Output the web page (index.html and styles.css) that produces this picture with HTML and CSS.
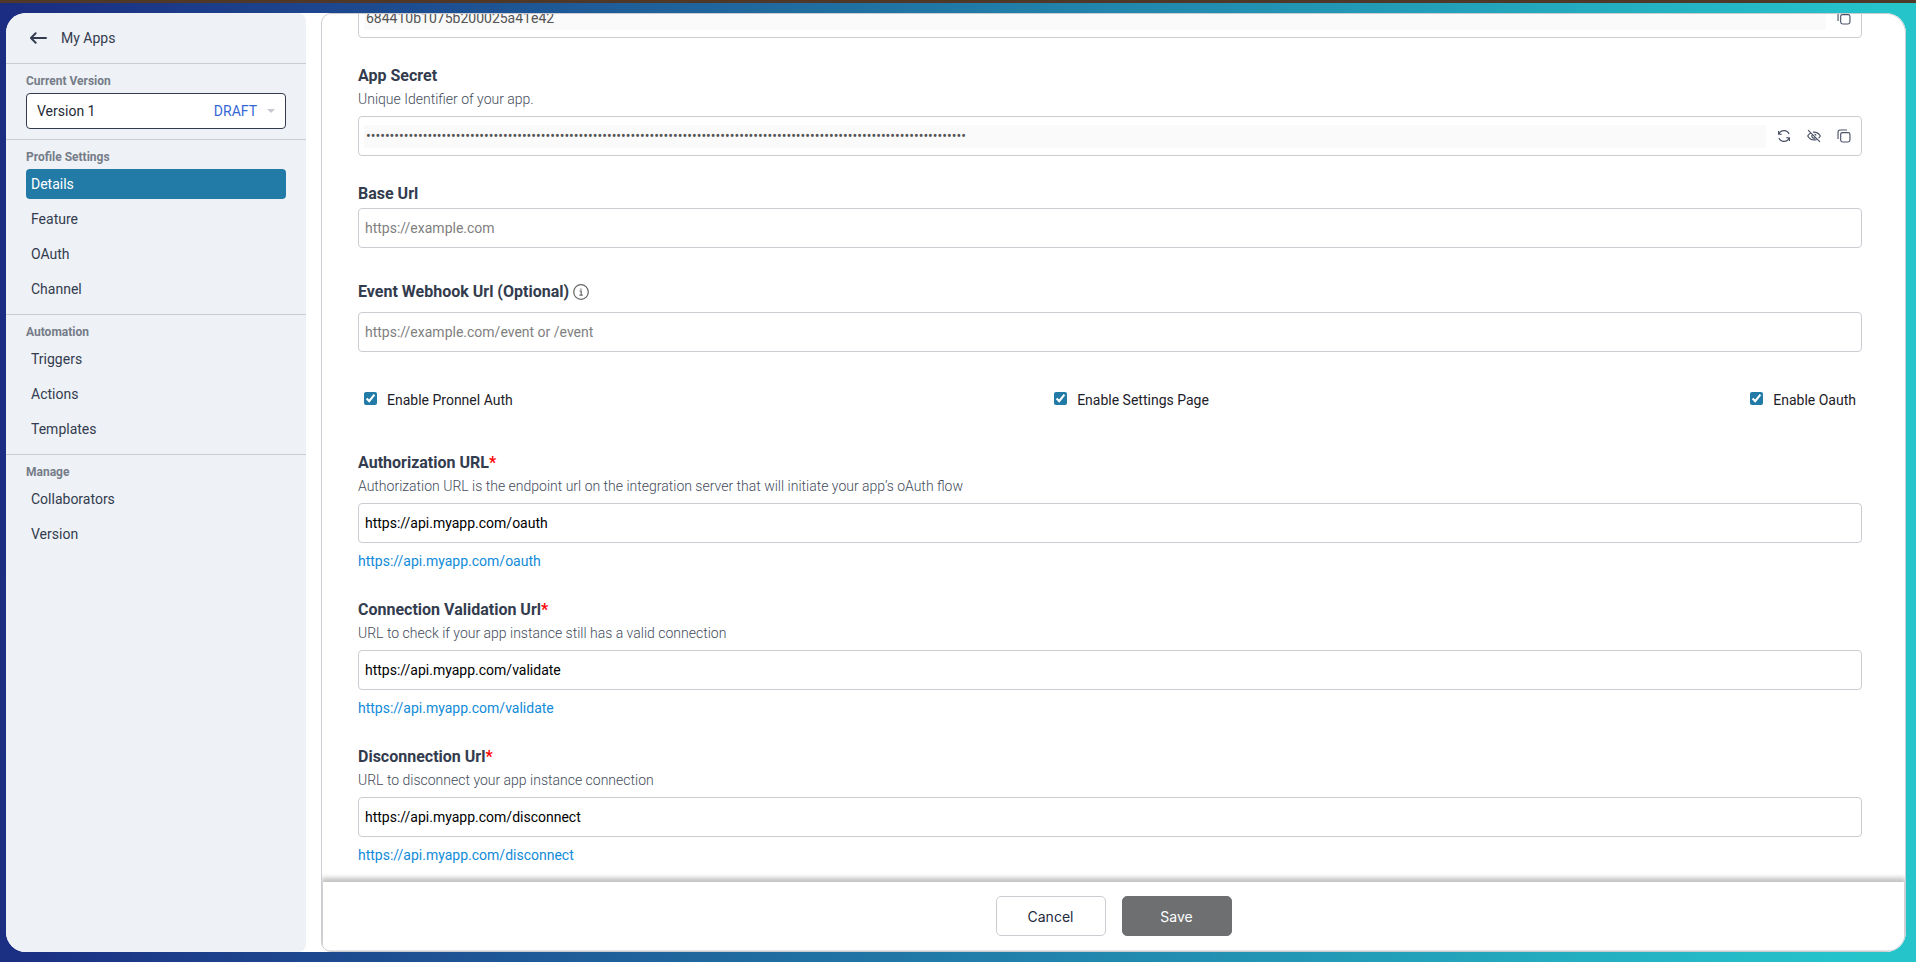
FILE: index.html
```html
<!DOCTYPE html>
<html lang="en">
<head>
<meta charset="utf-8">
<meta name="viewport" content="width=device-width, initial-scale=1">
<title>My Apps</title>
<link rel="stylesheet" href="styles.css">
</head>
<body>
<svg class="sprite" aria-hidden="true">
  <symbol id="icon-copy" viewBox="0 0 16 16">
    <rect x="4.200" y="4.200" width="10.600" height="10.600" rx="2.200"/>
    <path d="M1.200 11.500V3.200a2 2 0 0 1 2-2h8.300"/>
  </symbol>
  <symbol id="icon-refresh" viewBox="0 0 16 16">
    <path d="M2.200 6A6.200 6.200 0 0 1 13.800 5.700M13.800 10A6.200 6.200 0 0 1 2.200 10.300M1.800 2.200V6h3.700M14.200 13.800V10h-3.700"/>
  </symbol>
  <symbol id="icon-eye-off" viewBox="0 0 16 16">
    <path d="M4.600 4.300C2.900 5.100 1.600 6.500.8 8c1.500 2.700 4 4.500 7.200 4.500 1.100 0 2.100-.2 3-.6M6.800 3.600c4-.5 6.900 1.700 8.400 4.400-.5 1-1.200 1.800-2 2.500M6.200 6.400a2.300 2.300 0 0 0 3.300 3.300M8.600 5.700a2.300 2.300 0 0 1 1.700 1.800M1.200 1.200l13.600 13.600"/>
  </symbol>
</svg>
<div class="shell">
  <aside class="sidebar">
    <header class="sidebar-head">
      <a class="back" href="#apps">
        <svg class="back-icon" viewBox="0 0 18 12" aria-hidden="true"><path d="M17 6H1.500M6 1 1 6l5 5"/></svg>
        My Apps
      </a>
    </header>
    <section class="group">
      <label class="group-title" for="version">Current Version</label>
      <div class="version">
        <select id="version" class="version-select"><option>Version 1</option></select>
        <span class="version-state">DRAFT</span>
        <svg class="caret" viewBox="0 0 8 4" aria-hidden="true"><path d="M0 0h8L4 4z"/></svg>
      </div>
    </section>
    <nav class="group">
      <h2 class="group-title">Profile Settings</h2>
      <a class="item item-active" href="#details">Details</a>
      <a class="item" href="#feature">Feature</a>
      <a class="item" href="#oauth">OAuth</a>
      <a class="item" href="#channel">Channel</a>
    </nav>
    <nav class="group">
      <h2 class="group-title">Automation</h2>
      <a class="item" href="#triggers">Triggers</a>
      <a class="item" href="#actions">Actions</a>
      <a class="item" href="#templates">Templates</a>
    </nav>
    <nav class="group">
      <h2 class="group-title">Manage</h2>
      <a class="item" href="#collaborators">Collaborators</a>
      <a class="item" href="#version-list">Version</a>
    </nav>
  </aside>

  <main class="panel">
    <div class="scroll">
      <form class="form" id="details-form">
        <div class="field">
          <div class="box">
            <input class="box-input" type="text" value="684410b1075b200025a41e42" aria-label="App Id" disabled>
            <button class="icon-btn" type="button" aria-label="Copy"><svg class="icon"><use href="#icon-copy"/></svg></button>
          </div>
        </div>
        <div class="field">
          <label class="label" for="secret">App Secret</label>
          <p class="hint">Unique Identifier of your app.</p>
          <div class="box">
            <input class="box-input" id="secret" type="password" disabled value="0000000000000000000000000000000000000000000000000000000000000000000000000000000000000000000000000000000000000000000000000000000">
            <button class="icon-btn" type="button" aria-label="Regenerate"><svg class="icon"><use href="#icon-refresh"/></svg></button>
            <button class="icon-btn" type="button" aria-label="Show"><svg class="icon"><use href="#icon-eye-off"/></svg></button>
            <button class="icon-btn" type="button" aria-label="Copy"><svg class="icon"><use href="#icon-copy"/></svg></button>
          </div>
        </div>
        <div class="field">
          <label class="label" for="base">Base Url</label>
          <input class="input" id="base" type="text" placeholder="https://example.com">
        </div>
        <div class="field">
          <div class="label-row">
            <label class="label" for="webhook">Event Webhook Url (Optional)</label>
            <svg class="info" viewBox="0 0 16 16" aria-hidden="true"><circle cx="8" cy="8" r="7.300"/><path d="M6.600 7.200h1.600v4M6.400 11.200h3.400M8 4.400v1.300"/></svg>
          </div>
          <input class="input" id="webhook" type="text" placeholder="https://example.com/event or /event">
        </div>
        <div class="checks">
          <label class="check"><input type="checkbox" checked>Enable Pronnel Auth</label>
          <label class="check"><input type="checkbox" checked>Enable Settings Page</label>
          <label class="check"><input type="checkbox" checked>Enable Oauth</label>
        </div>
        <div class="field">
          <label class="label" for="auth">Authorization URL<span class="required">*</span></label>
          <p class="hint">Authorization URL is the endpoint url on the integration server that will initiate your app’s oAuth flow</p>
          <input class="input" id="auth" type="text" value="https://api.myapp.com/oauth">
          <a class="preview" href="#oauth-url">https://api.myapp.com/oauth</a>
        </div>
        <div class="field">
          <label class="label" for="validate">Connection Validation Url<span class="required">*</span></label>
          <p class="hint">URL to check if your app instance still has a valid connection</p>
          <input class="input" id="validate" type="text" value="https://api.myapp.com/validate">
          <a class="preview" href="#validate-url">https://api.myapp.com/validate</a>
        </div>
        <div class="field">
          <label class="label" for="disconnect">Disconnection Url<span class="required">*</span></label>
          <p class="hint">URL to disconnect your app instance connection</p>
          <input class="input" id="disconnect" type="text" value="https://api.myapp.com/disconnect">
          <a class="preview" href="#disconnect-url">https://api.myapp.com/disconnect</a>
        </div>
      </form>
    </div>
    <footer class="actions">
      <button class="btn" type="button">Cancel</button>
      <button class="btn btn-save" type="submit" form="details-form">Save</button>
    </footer>
  </main>
</div>
</body>
</html>
```
FILE: styles.css
```css
:root {
  --ink: #333c4e;
  --muted: #757c88;
  --line: #cbccd2;
  --accent: #227aa7;
}

* { box-sizing: border-box; }

body {
  margin: 0;
  height: 100vh;
  padding: 10px 10px 10px 6px;
  border-top: 3px solid #503828;
  background: linear-gradient(92deg, #1b2c81, #25c4cb 97%);
  color: var(--ink);
  font: 14px/20px Roboto, sans-serif;
  overflow: hidden;
}

input, select, button { font: inherit; }
h2, p { margin: 0; }
a { text-decoration: none; }
.sprite { display: none; }

.shell {
  display: flex;
  gap: 15px;
  height: 100%;
  border-radius: 20px;
  background: #fff;
  overflow: hidden;
}

/* Sidebar */
.sidebar {
  flex: 0 0 300px;
  background: #eef1f6;
  border-radius: 0 8px 8px 0;
}

.sidebar-head {
  display: flex;
  align-items: center;
  height: 50px;
  padding: 0 24px;
}

.back {
  display: flex;
  align-items: center;
  gap: 14px;
  color: var(--ink);
}

.back-icon {
  width: 17px;
  height: 12px;
  fill: none;
  stroke: currentColor;
  stroke-width: 2;
  stroke-linecap: round;
  stroke-linejoin: round;
}

.group {
  display: flex;
  flex-direction: column;
  gap: 5px;
  padding: 10px 20px;
  border-top: 1px solid var(--line);
}

.group-title {
  color: var(--muted);
  font-size: 12px;
  font-weight: 700;
  line-height: 14px;
}

.version {
  display: flex;
  align-items: center;
  height: 36px;
  padding: 0 10px;
  border: 1px solid var(--ink);
  border-radius: 4px;
  background: #fff;
}

.version-select {
  flex: 1;
  min-width: 0;
  padding: 0;
  border: 0;
  background: none;
  color: #1f2937;
  appearance: none;
}

.version-state { color: #3467d6; }

.caret {
  width: 8px;
  height: 4px;
  margin-left: 10px;
  fill: #c7c9d0;
}

.item {
  padding: 5px;
  border-radius: 4px;
  color: var(--ink);
}

.item-active {
  background: var(--accent);
  color: #fff;
}

/* Main panel */
.panel {
  flex: 1;
  display: flex;
  flex-direction: column;
  min-width: 0;
  border: 1px solid var(--line);
  border-radius: 10px 20px 20px 10px;
  overflow: hidden;
}

.scroll {
  flex: 1;
  min-height: 0;
  overflow: hidden;
}

/* The form rests slightly scrolled, its first field cut by the panel edge. */
.form {
  display: flex;
  flex-direction: column;
  gap: 25px;
  margin-top: -16px;
  padding: 0 43px 0 36px;
}

.field {
  display: flex;
  flex-direction: column;
}

.label {
  font-size: 16px;
  font-weight: 700;
  line-height: 26px;
  margin-bottom: 1px;
}

.label-row {
  display: flex;
  align-items: center;
  gap: 4px;
  height: 38px;
  margin-bottom: 1px;
}

.label-row .label { margin-bottom: 0; }

.info {
  width: 16px;
  height: 16px;
  fill: none;
  stroke: #666;
  stroke-width: 1.2;
}

.required { color: #f00; }

.hint {
  margin-bottom: 7px;
  color: #434c5b;
  font-weight: 300;
  line-height: 19px;
}

.input, .box {
  width: 100%;
  height: 40px;
  border: 1px solid var(--line);
  border-radius: 4px;
  background: #fff;
}

.input {
  padding: 0 6px;
  color: #000;
}

.input::placeholder { color: #808080; }

.box {
  display: flex;
  align-items: center;
  gap: 10px;
  padding: 0 7px 0 5px;
}

.box-input {
  flex: 1;
  min-width: 0;
  height: 23px;
  margin-right: -2px;
  padding: 0 2px;
  border: 0;
  background: #fafafa;
  color: #545454;
}

.icon-btn {
  display: grid;
  place-items: center;
  width: 20px;
  height: 20px;
  padding: 0;
  border: 0;
  background: none;
  color: #4a5268;
}

.icon {
  width: 14px;
  height: 14px;
  fill: none;
  stroke: currentColor;
  stroke-width: 1.3;
}

.checks {
  display: flex;
  align-items: center;
  justify-content: space-between;
  height: 48px;
  padding: 0 6px 2px;
}

.check {
  display: flex;
  align-items: flex-start;
  gap: 10px;
  color: #1c2027;
}

.check input {
  width: 13px;
  height: 13px;
  margin: 2px 0 0;
  accent-color: var(--accent);
}

.preview {
  align-self: flex-start;
  margin-top: 7px;
  color: #118bd8;
  line-height: 22px;
}

.actions {
  display: flex;
  justify-content: center;
  gap: 16px;
  margin: 0 1px 1px;
  padding: 14px;
  background: #fff;
  box-shadow: 0 -2px 5px 2px rgba(0, 0, 0, .25);
}

.btn {
  width: 110px;
  height: 40px;
  padding: 2px 0 0;
  border: 1px solid var(--line);
  border-radius: 5px;
  background: #fff;
  color: #1f2a3d;
  font-family: Inter, sans-serif;
}

.btn-save {
  border-color: #6e6f71;
  background: #6e6f71;
  color: #fff;
}
```
